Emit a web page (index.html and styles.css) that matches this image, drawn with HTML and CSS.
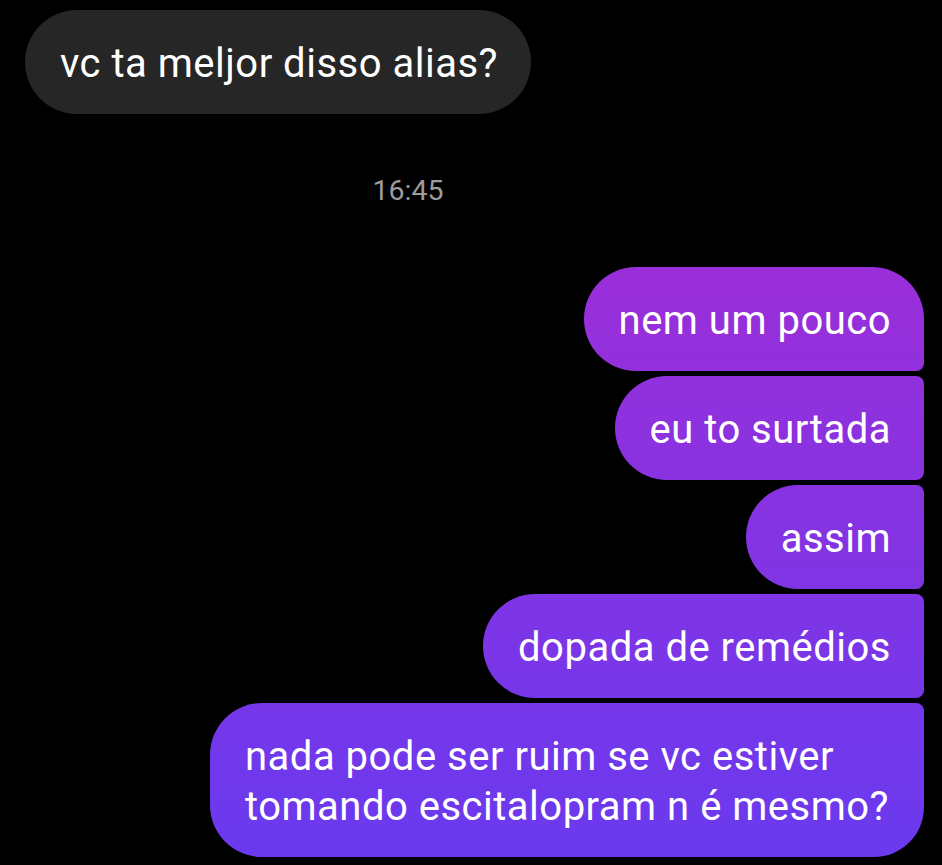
FILE: index.html
```html
<!DOCTYPE html>
<html lang="pt">
<head>
<meta charset="utf-8">
<link rel="stylesheet" href="styles.css">
</head>
<body>
<div class="chat">
  <div class="row-in">
    <div class="bubble in">vc ta meljor disso alias?</div>
  </div>
  <div class="time">16:45</div>
  <div class="group">
    <div class="bubble out first">nem um pouco</div>
    <div class="bubble out">eu to surtada</div>
    <div class="bubble out">assim</div>
    <div class="bubble out">dopada de remédios</div>
    <div class="bubble out last">nada pode ser ruim se vc estiver<br>tomando escitalopram n é mesmo?</div>
  </div>
</div>
</body>
</html>
```
FILE: styles.css
```css
html, body {
  margin: 0;
  padding: 0;
  background: #000;
}
body {
  width: 942px;
  height: 865px;
  overflow: hidden;
  font-family: Roboto, "Noto Sans", sans-serif;
}
.chat {
  display: flex;
  flex-direction: column;
  padding: 10px 18px 0 25px;
}
.row-in {
  display: flex;
}
.bubble {
  font-size: 40px;
  letter-spacing: 0.5px;
  line-height: 50px;
  color: #fff;
  padding: 29px 33px 25px 35px;
  white-space: nowrap;
}
.in {
  background: #262626;
  border-radius: 52px;
}
.time {
  margin: 60px 0 0 347px;
  width: 72px;
  text-align: center;
  font-size: 28.5px;
  line-height: 34px;
  color: #9c9c9c;
}
.group {
  display: flex;
  flex-direction: column;
  align-items: flex-end;
  gap: 5px;
  margin-top: 59px;
}
.out {
  background: linear-gradient(to bottom, #b029cf 0px, #693aef 865px);
  background-attachment: fixed;
  border-radius: 52px 8px 8px 52px;
}
.out.first {
  border-radius: 52px 52px 8px 52px;
}
.out.last {
  border-radius: 52px 8px 50px 52px;
  padding-right: 35px;
}
```
